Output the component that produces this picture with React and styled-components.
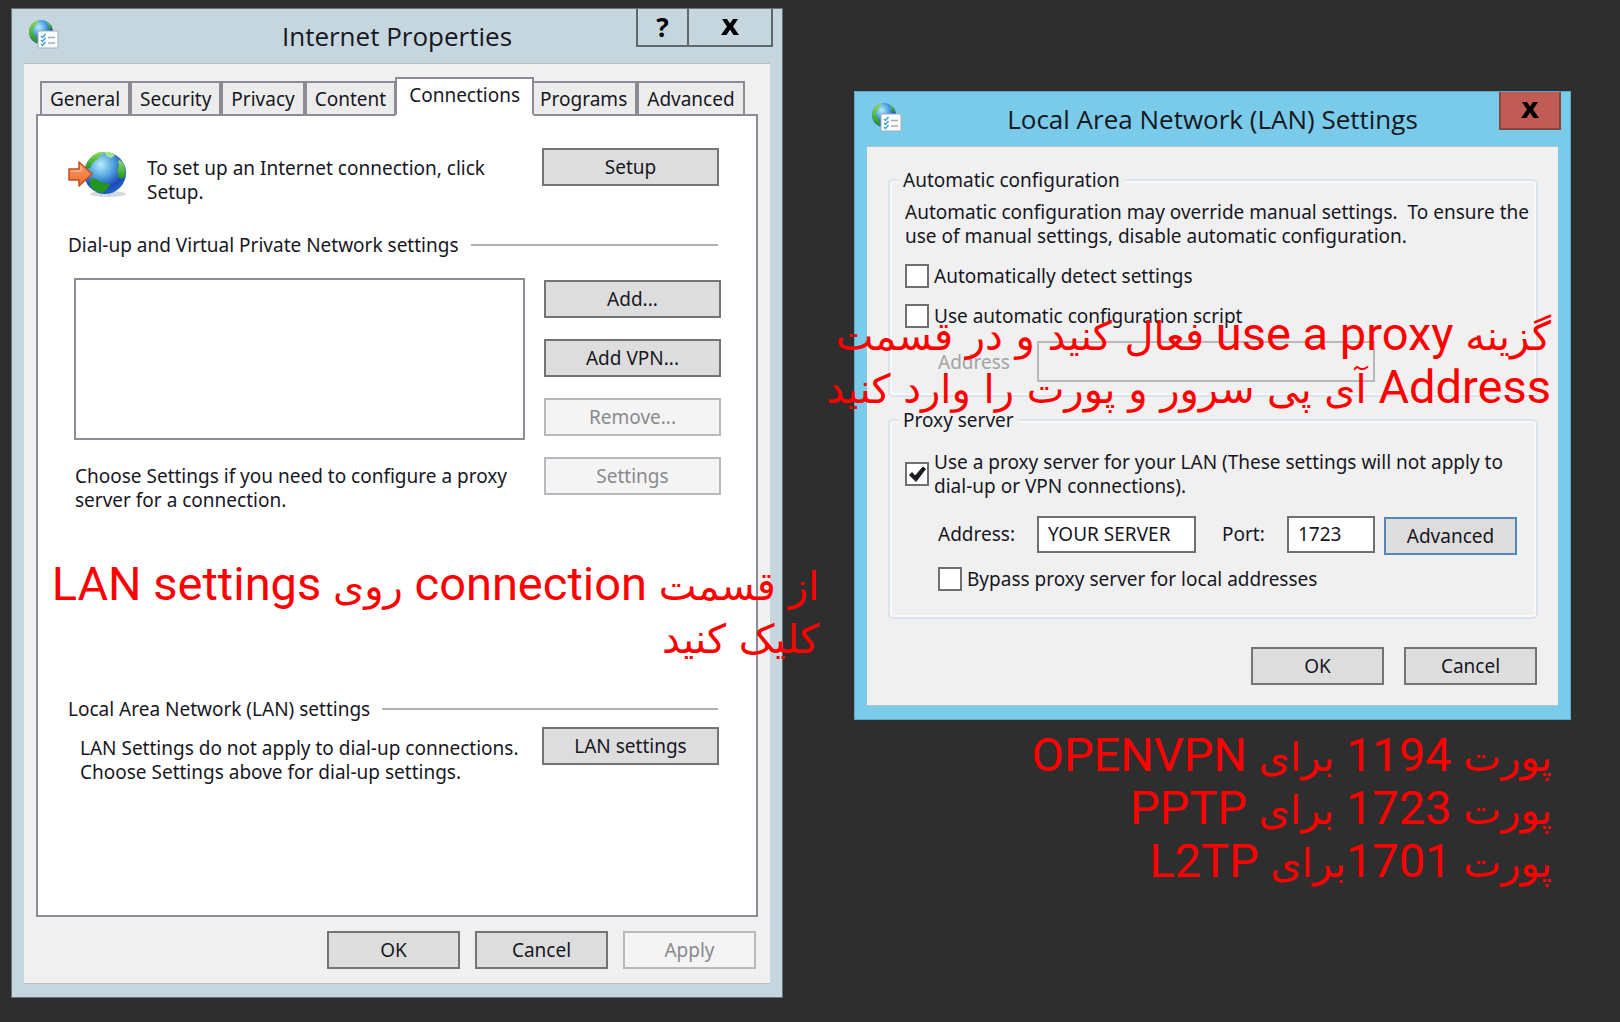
import { useState } from "react";
import styled, { createGlobalStyle, css } from "styled-components";

const GlobalStyle = createGlobalStyle`
  *, *::before, *::after {
    box-sizing: border-box;
  }
  body {
    margin: 0;
    background: #2e2e2e;
    color: #17171f;
    font-family: "Noto Sans", "Open Sans", sans-serif;
    font-size: 19px;
    line-height: 24px;
  }
  button, input, select {
    font: inherit;
    color: inherit;
    margin: 0;
  }
  p {
    margin: 0;
  }
`;

const Page = styled.main`
  display: flex;
  align-items: flex-start;
  gap: 71px;
  min-height: 100vh;
  padding: 8px 49px 26px 11px;
`;

const Column = styled.div`
  position: relative;
  flex: ${(props) => props.grow} 1 0;
  min-width: 0;
  padding-top: ${(props) => props.top || 0}px;
`;

const Dialog = styled.section`
  background: ${(props) => (props.active ? "#79cbe9" : "#c5d6de")};
  border: 1px solid ${(props) => (props.active ? "#5fa9c6" : "#66747b")};
  padding: 0 12px 13px;
`;

const TitleBar = styled.header`
  display: grid;
  grid-template-columns: 1fr auto 1fr;
  align-items: start;
  height: 54px;
  padding: 0 3px;
`;

const TitleIcon = styled.svg`
  width: 32px;
  height: 32px;
  margin-top: 10px;
`;

const Title = styled.h1`
  margin: 0;
  padding-top: 9px;
  font-family: "Open Sans", "Noto Sans", sans-serif;
  font-size: 26px;
  font-weight: 400;
  line-height: 36px;
  white-space: nowrap;
`;

const Controls = styled.div`
  display: flex;
  justify-content: flex-end;
  margin-right: -6px;
`;

const ControlButton = styled.button`
  display: flex;
  align-items: center;
  justify-content: center;
  width: ${(props) => props.w}px;
  height: 38px;
  padding: 0;
  color: #000;
  background: ${(props) => (props.danger ? "#c05b55" : "transparent")};
  border: 2px solid ${(props) => (props.danger ? "#86453f" : "#5c686e")};
  border-top: none;
  font-size: 26px;
  font-weight: 700;
  & + & {
    border-left: none;
  }
`;

const Client = styled.div`
  background: #f0f0f0;
  border-top: 1px solid #b5c0c6;
  border-bottom: 1px solid #b5c0c6;
  padding: ${(props) => props.pad};
`;

const Tabs = styled.div`
  display: flex;
  align-items: flex-end;
  padding-left: 4px;
`;

const Tab = styled.button`
  height: 35px;
  margin-bottom: -2px;
  padding: 0 8px;
  background: #ececec;
  border: 2px solid #8b8c96;
  white-space: nowrap;
  ${(props) =>
    props.active &&
    css`
      position: relative;
      height: 39px;
      padding: 0 12px 4px;
      margin-left: -1px;
      margin-right: -4px;
      background: #fff;
      border-bottom-color: #fff;
    `}
`;

const TabPanel = styled.div`
  background: #fff;
  border: 2px solid #8b8c96;
  padding: 32px 35px 131px 30px;
`;

const Row = styled.div`
  display: flex;
  align-items: flex-start;
  justify-content: space-between;
  gap: 19px;
  padding-right: 2px;
`;

const SetupIcon = styled.svg`
  flex: none;
  width: 60px;
  height: 48px;
  margin-top: 3px;
`;

const Copy = styled.p`
  flex: 1;
  padding-top: ${(props) => props.top || 0}px;
  padding-left: ${(props) => props.left || 0}px;
  white-space: pre;
`;

const SectionTitle = styled.h2`
  display: flex;
  align-items: center;
  gap: 12px;
  margin: ${(props) => props.gap}px 0 0;
  font-size: inherit;
  font-weight: 400;
  &::after {
    content: "";
    flex: 1;
    height: 2px;
    margin-right: 3px;
    background: #b1b1b4;
  }
`;

const Button = styled.button`
  flex: none;
  width: ${(props) => props.w || 133}px;
  height: 38px;
  padding: 0;
  background: #dddddd;
  border: 2px solid ${(props) => (props.focused ? "#5587b5" : "#747474")};
  &:disabled {
    color: #8a8a8e;
    background: #f4f4f4;
    border-color: #b6babf;
  }
`;

const LanButton = styled(Button)`
  margin-top: 6px;
`;

const DialUp = styled(Row)`
  margin-top: 21px;
  padding: 0 0 0 6px;
`;

const ListColumn = styled.div`
  flex: 1;
`;

const ConnectionList = styled.select`
  display: block;
  width: 100%;
  height: 162px;
  margin-bottom: 24px;
  background: #fff;
  border: 2px solid #8b8c96;
  border-radius: 0;
  outline: none;
`;

const ButtonStack = styled.div`
  display: flex;
  flex-direction: column;
  gap: 21px;
  padding-top: 2px;
`;

const Footer = styled.footer`
  display: flex;
  justify-content: flex-end;
  gap: ${(props) => props.gap}px;
  padding: ${(props) => props.pad};
`;

const Group = styled.fieldset`
  min-width: 0;
  margin: 0 0 ${(props) => props.bottom}px;
  padding: ${(props) => props.pad};
  border: 2px solid #dde3ea;
  border-radius: 5px;
  box-shadow: inset 0 0 0 2px #f9f9f9;
`;

const Legend = styled.legend`
  margin-left: -7px;
  padding: 0 5px;
  background: #f0f0f0;
`;

const CheckLabel = styled.label`
  display: flex;
  align-items: center;
  gap: 5px;
  margin-top: ${(props) => props.top}px;
  padding-left: ${(props) => props.left || 0}px;
  white-space: pre;
`;

const CheckBoxFrame = styled.span`
  position: relative;
  flex: none;
  width: 24px;
  height: 24px;
  svg {
    position: absolute;
    inset: 0;
    pointer-events: none;
  }
`;

const CheckInput = styled.input`
  appearance: none;
  display: block;
  width: 24px;
  height: 24px;
  background: #fff;
  border: 2px solid #6f6f6f;
`;

const ScriptRow = styled.div`
  display: grid;
  grid-template-columns: 99px 338px;
  align-items: center;
  margin-top: 13px;
  padding-left: 33px;
  color: #a3a3a6;
`;

const ProxyRow = styled.div`
  display: grid;
  grid-template-columns: 99px 159px 91px 88px auto;
  align-items: center;
  margin-top: 15px;
  padding-left: 33px;
`;

const PortLabel = styled.label`
  padding-left: 26px;
`;

const ProxyAdvanced = styled(Button)`
  margin-top: 4px;
  margin-left: 9px;
`;

const TextInput = styled.input`
  width: 100%;
  min-width: 0;
  height: ${(props) => props.h || 37}px;
  padding: 0 9px;
  background: #fff;
  border: 2px solid #6f6f6f;
  border-radius: 0;
  &:disabled {
    background: #f0f0f0;
    border-color: #b9b9bc;
  }
`;

const Note = styled.div`
  direction: rtl;
  color: #ff0000;
  font-family: Roboto, "DejaVu Sans", sans-serif;
  font-size: 47px;
  line-height: 53px;
  white-space: nowrap;
`;

/* hand notes that lie over the dialogs */
const FloatingNote = styled(Note)`
  position: absolute;
  top: ${(props) => props.y}px;
  right: ${(props) => props.x}px;
  z-index: 2;
`;

const PortsNote = styled(Note)`
  padding: 8px 19px 0 0;
`;

const Fa = styled.span`
  font-family: "DejaVu Sans", sans-serif;
  font-size: 40px;
  line-height: 1;
`;

function GlobeDefs() {
  return (
    <defs>
      <radialGradient id="sea" cx="0.4" cy="0.3" r="0.75">
        <stop offset="0" stopColor="#b9ecfb" />
        <stop offset="0.4" stopColor="#4fa3df" />
        <stop offset="0.75" stopColor="#2148b8" />
        <stop offset="1" stopColor="#1a6bd0" />
      </radialGradient>
      <linearGradient id="land" x1="0" y1="0" x2="0" y2="1">
        <stop offset="0" stopColor="#8fdc5c" />
        <stop offset="1" stopColor="#1f9420" />
      </linearGradient>
      <linearGradient id="arrow" x1="0" y1="0" x2="0" y2="1">
        <stop offset="0" stopColor="#f9a26c" />
        <stop offset="1" stopColor="#ee6a2c" />
      </linearGradient>
    </defs>
  );
}

function PropertiesIcon() {
  return (
    <TitleIcon viewBox="0 0 32 32" aria-hidden="true">
      <GlobeDefs />
      <circle cx="14" cy="13" r="12" fill="url(#sea)" />
      <path d="M5 5 Q8 2 11 1 Q12 3 9 5 Q9 7 6 10 Q5 13 8 16 L11 24 Q4 22 2 14 Q2 8 5 5Z" fill="url(#land)" />
      <path d="M19 2 Q24 5 25 10 L22 10 Q22 6 19 2Z" fill="url(#land)" />
      <rect x="11" y="12" width="20" height="17" rx="1" fill="#fbfcfd" stroke="#a4b0b8" />
      <path d="M14 17 l1.500 1.500 l3 -3.500 M14 21 l1.500 1.500 l3 -3.500 M14 25 l1.500 1.500 l3 -3.500" fill="none" stroke="#3fa4c6" strokeWidth="1.500" />
      <path d="M21 18.500 H28 M21 24 H28" stroke="#a9a9b4" strokeWidth="1.500" />
    </TitleIcon>
  );
}

function ConnectIcon() {
  return (
    <SetupIcon viewBox="0 0 60 48" aria-hidden="true">
      <ellipse cx="40" cy="43" rx="18" ry="3" fill="#b8bcc4" opacity="0.600" />
      <circle cx="37" cy="22" r="21" fill="url(#sea)" />
      <path d="M17 18 Q19 6 31 1 Q35 1 36 3 Q31 4 30 8 Q25 10 22 17Z" fill="url(#land)" />
      <path d="M36 1 Q42 0 47 4 Q44 8 40 6 Q38 4 36 1Z" fill="#a4e28d" />
      <path d="M50 10 Q52 8 54 11 Q58 16 57 25 Q54 30 50 26 Q51 22 49 20 Q52 16 50 10Z" fill="url(#land)" />
      <path d="M22 29 Q26 25 31 30 Q38 33 42 33 Q40 39 34 42 Q27 41 22 35Z" fill="#23961f" />
      <path d="M1 18 H11 V11 L24 23 L11 35 V29 H1Z" fill="url(#arrow)" stroke="#c44c1d" strokeWidth="1.500" strokeLinejoin="round" />
      <path d="M3 20 H13 V15" fill="none" stroke="#fdc6a2" strokeWidth="1" />
    </SetupIcon>
  );
}

function CloseGlyph() {
  return (
    <svg width="18" height="16" viewBox="0 0 18 16" aria-hidden="true">
      <path d="M1 0 H6 L9 4.500 L12 0 H17 L12 7.500 L18 16 H12.500 L9 10.500 L5.500 16 H0 L6 7.500Z" fill="#000" />
    </svg>
  );
}

function CheckBox({ label, top, left, initial = false }) {
  const [checked, setChecked] = useState(initial);

  return (
    <CheckLabel top={top} left={left}>
      <CheckBoxFrame>
        <CheckInput
          type="checkbox"
          checked={checked}
          onChange={() => setChecked(!checked)}
        />
        {checked && (
          <svg viewBox="0 0 24 24" aria-hidden="true">
            <path d="M4.500 13 L7 10.500 L10 14 L18 5 L20.500 7 L11 19.500Z" fill="#1b1b1f" stroke="#1b1b1f" />
          </svg>
        )}
      </CheckBoxFrame>
      {label}
    </CheckLabel>
  );
}

const TABS = ["General", "Security", "Privacy", "Content", "Connections", "Programs", "Advanced"];

function InternetProperties() {
  const [tab, setTab] = useState("Connections");

  return (
    <Dialog>
      <TitleBar>
        <PropertiesIcon />
        <Title>Internet Properties</Title>
        <Controls>
          <ControlButton w={53} aria-label="Help">?</ControlButton>
          <ControlButton w={84} aria-label="Close">
            <CloseGlyph />
          </ControlButton>
        </Controls>
      </TitleBar>
      <Client pad="13px 12px 14px">
        <Tabs role="tablist">
          {TABS.map((name) => (
            <Tab
              key={name}
              role="tab"
              aria-selected={tab === name}
              active={tab === name ? 1 : undefined}
              onClick={() => setTab(name)}
            >
              {name}
            </Tab>
          ))}
        </Tabs>
        <TabPanel role="tabpanel">
          <Row>
            <ConnectIcon />
            <Copy top={8}>{"To set up an Internet connection, click\nSetup."}</Copy>
            <Button w={177}>Setup</Button>
          </Row>
          <SectionTitle gap={29}>Dial-up and Virtual Private Network settings</SectionTitle>
          <DialUp>
            <ListColumn>
              <ConnectionList size={4} aria-label="Connections" />
              <Copy left={1}>{"Choose Settings if you need to configure a proxy\nserver for a connection."}</Copy>
            </ListColumn>
            <ButtonStack>
              <Button w={177}>Add...</Button>
              <Button w={177}>Add VPN...</Button>
              <Button w={177} disabled>Remove...</Button>
              <Button w={177} disabled>Settings</Button>
            </ButtonStack>
          </DialUp>
          <SectionTitle gap={185}>Local Area Network (LAN) settings</SectionTitle>
          <Row>
            <Copy top={15} left={12}>
              {"LAN Settings do not apply to dial-up connections.\nChoose Settings above for dial-up settings."}
            </Copy>
            <LanButton w={177}>LAN settings</LanButton>
          </Row>
        </TabPanel>
        <Footer gap={15} pad="14px 2px 0 0">
          <Button>OK</Button>
          <Button>Cancel</Button>
          <Button disabled>Apply</Button>
        </Footer>
      </Client>
    </Dialog>
  );
}

function LanSettings() {
  return (
    <Dialog active={1}>
      <TitleBar>
        <PropertiesIcon />
        <Title>Local Area Network (LAN) Settings</Title>
        <Controls>
          <ControlButton w={62} danger={1} aria-label="Close">
            <CloseGlyph />
          </ControlButton>
        </Controls>
      </TitleBar>
      <Client pad="21px 20px 20px 21px">
        <Group bottom={11} pad="8px 14px 13px 15px">
          <Legend>Automatic configuration</Legend>
          <Copy>
            {"Automatic configuration may override manual settings.\u00a0 To ensure the\nuse of manual settings, disable automatic configuration."}
          </Copy>
          <CheckBox top={16} label="Automatically detect settings" />
          <CheckBox top={16} label="Use automatic configuration script" />
          <ScriptRow>
            <label htmlFor="script-address">Address</label>
            <TextInput id="script-address" h={41} disabled />
          </ScriptRow>
        </Group>
        <Group bottom={28} pad="18px 14px 26px 15px">
          <Legend>Proxy server</Legend>
          <CheckBox
            top={0}
            initial
            label={"Use a proxy server for your LAN (These settings will not apply to\ndial-up or VPN connections)."}
          />
          <ProxyRow>
            <label htmlFor="proxy-address">Address:</label>
            <TextInput id="proxy-address" defaultValue="YOUR SERVER" />
            <PortLabel htmlFor="proxy-port">Port:</PortLabel>
            <TextInput id="proxy-port" defaultValue="1723" />
            <ProxyAdvanced focused={1}>Advanced</ProxyAdvanced>
          </ProxyRow>
          <CheckBox top={12} left={33} label="Bypass proxy server for local addresses" />
        </Group>
        <Footer gap={20} pad="0 1px 0 0">
          <Button>OK</Button>
          <Button>Cancel</Button>
        </Footer>
      </Client>
    </Dialog>
  );
}

function App() {
  return (
    <>
      <GlobalStyle />
      <Page>
        <Column grow={772}>
          <InternetProperties />
          <FloatingNote lang="fa" y={549} x={-36}>
            <Fa>از قسمت</Fa> connection <Fa>روی</Fa> LAN settings
            <br />
            <Fa>کلیک کنید</Fa>
          </FloatingNote>
        </Column>
        <Column grow={717} top={83}>
          <LanSettings />
          <FloatingNote lang="fa" y={299} x={20}>
            <Fa>گزینه</Fa> use a proxy <Fa>فعال کنید و در قسمت</Fa>
            <br />
            Address <Fa>آی پی سرور و پورت را وارد کنید</Fa>
          </FloatingNote>
          <PortsNote lang="fa">
            <Fa>پورت</Fa> 1194 <Fa>برای</Fa> OPENVPN
            <br />
            <Fa>پورت</Fa> 1723 <Fa>برای</Fa> PPTP
            <br />
            <Fa>پورت</Fa> 1701<Fa>برای</Fa> L2TP
          </PortsNote>
        </Column>
      </Page>
    </>
  );
}

export default App;
